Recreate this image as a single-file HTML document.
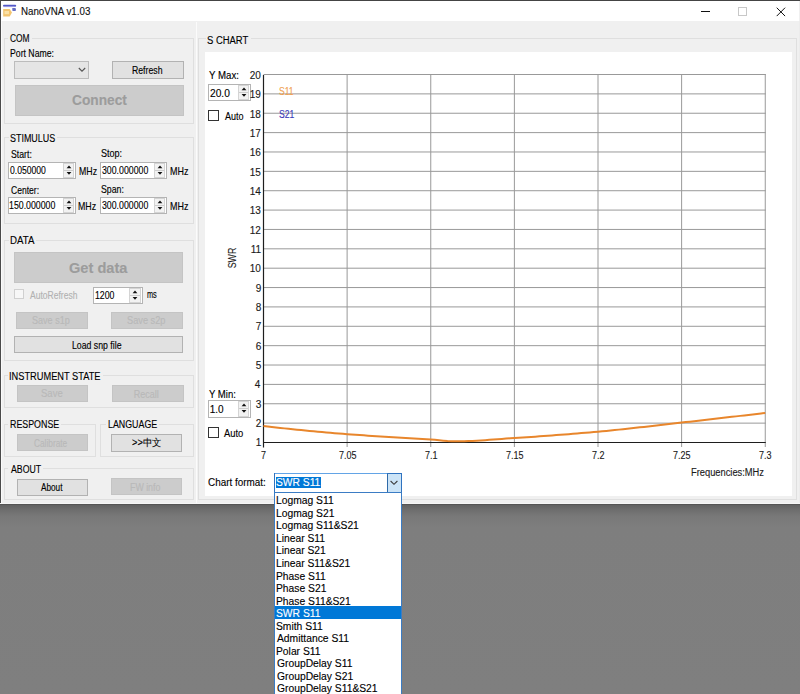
<!DOCTYPE html>
<html><head><meta charset="utf-8"><style>
html,body{margin:0;padding:0;width:800px;height:694px;overflow:hidden;background:#7f7f7f;}
body{position:relative;font-family:"Liberation Sans",sans-serif;}
.a{position:absolute;}
.t{position:absolute;white-space:nowrap;line-height:1;font-family:"Liberation Sans",sans-serif;-webkit-text-stroke:0.12px currentColor;}
</style></head><body>
<div class="a" style="left:0;top:504px;width:800px;height:190px;background:linear-gradient(#484848 0px,#626262 1px,#6c6c6c 5px,#787878 12px,#7e7e7e 24px,#7f7f7f 190px)"></div>
<div class="a" style="left:0px;top:0px;width:800px;height:504px;background:#f0f0f0;"></div>
<div class="a" style="left:0px;top:0px;width:800px;height:1px;background:#444;"></div>
<div class="a" style="left:0px;top:0px;width:1px;height:504px;background:#4a4a4a;"></div>
<div class="a" style="left:1px;top:21px;width:1px;height:483px;background:#fafafa;"></div>
<div class="a" style="left:799px;top:21px;width:1px;height:483px;background:#ececec;"></div>
<div class="a" style="left:0px;top:503px;width:800px;height:1px;background:#f6f6f6;"></div>
<div class="a" style="left:1px;top:1px;width:798px;height:20px;background:#fff;"></div>
<svg class="a" style="left:0;top:0" width="20" height="20" viewBox="0 0 20 20">
<rect x="3" y="4.8" width="13.2" height="2" rx="1" fill="#5158c8"/>
<rect x="3.5" y="6.4" width="11" height="0.8" fill="#b8b0f0" opacity="0.7"/>
<path d="M12.3 8 h2.6 a1 1 0 0 1 1 1 v1.3 a0.8 0.8 0 0 1 -0.8 0.8 h-2 a0.8 0.8 0 0 1 -0.8 -0.8z" fill="#4a55b8" opacity="0.85"/>
<path d="M3.2 9 h6.5 l2.3 3.4 l-2.3 4 h-6.5z" fill="#f2bf62" opacity="0.9"/>
<rect x="4.5" y="11" width="4.5" height="3.2" fill="#fbe2a8"/>
</svg>
<div class="t" style="top:7.00px;font-size:10px;color:#111;left:20.53px;transform-origin:0 0;transform:scale(0.9743,1.000);">NanoVNA v1.03</div>
<div class="a" style="left:701px;top:11px;width:9px;height:1px;background:#111;"></div>
<div class="a" style="left:738px;top:7px;width:9px;height:9px;border:1px solid #c8c8c8;box-sizing:border-box;"></div>
<svg class="a" style="left:775px;top:5.5px" width="12" height="12" viewBox="0 0 12 12"><path d="M1.7 1.7 L10.1 10.1 M10.1 1.7 L1.7 10.1" stroke="#111" stroke-width="1"/></svg>
<div class="a" style="left:4px;top:38px;width:190px;height:86px;border:1px solid #dfdfdf;box-sizing:border-box;"></div>
<div class="a" style="left:7.75px;top:37px;width:23.85px;height:3px;background:#f0f0f0;"></div>
<div class="t" style="top:34.00px;font-size:10px;color:#000;left:10.05px;transform-origin:0 0;transform:scale(0.8370,1.000);">COM</div>
<div class="t" style="top:48.88px;font-size:9px;color:#000;left:10.23px;transform-origin:0 0;transform:scale(0.9659,1.120);">Port Name:</div>
<div class="a" style="left:14px;top:61px;width:75px;height:18px;background:#e5e5e5;border:1px solid #bcbcbc;box-sizing:border-box;"></div>
<svg class="a" style="left:78px;top:67px" width="8" height="6" viewBox="0 0 8 6"><path d="M0.8 1 L4 4.2 L7.2 1" fill="none" stroke="#555" stroke-width="1.1"/></svg>
<div class="a" style="left:112px;top:61px;width:72px;height:18px;background:#e1e1e1;border:1px solid #b2b2b2;box-sizing:border-box;"></div>
<div class="t" style="top:66.00px;font-size:9px;color:#000;left:131.73px;transform-origin:0 0;transform:scale(0.9667,1.120);">Refresh</div>
<div class="a" style="left:15px;top:85px;width:169px;height:31px;background:#cccccc;border:1px solid #c4c4c4;box-sizing:border-box;"></div>
<div class="t" style="top:93.00px;font-size:14px;color:#9c9c9c;font-weight:700;left:71.70px;transform-origin:0 0;transform:scale(0.9804,1.000);">Connect</div>
<div class="a" style="left:4px;top:137px;width:190px;height:87px;border:1px solid #dfdfdf;box-sizing:border-box;"></div>
<div class="a" style="left:8.6px;top:136px;width:48.4px;height:3px;background:#f0f0f0;"></div>
<div class="t" style="top:134.00px;font-size:10px;color:#000;left:10.01px;transform-origin:0 0;transform:scale(0.8939,1.000);">STIMULUS</div>
<div class="t" style="top:149.88px;font-size:9px;color:#000;left:10.58px;transform-origin:0 0;transform:scale(0.9700,1.120);">Start:</div>
<div class="t" style="top:149.48px;font-size:9px;color:#000;left:100.99px;transform-origin:0 0;transform:scale(1.0053,1.120);">Stop:</div>
<div class="a" style="left:8px;top:162px;width:68px;height:17px;background:#fff;border:1px solid #b4b4b4;box-sizing:border-box;"></div>
<div class="a" style="left:63px;top:163px;width:11px;height:15px;background:#f2f2f2;border:1px solid #d4d4d4;box-sizing:border-box;"></div>
<div class="a" style="left:64px;top:170px;width:9px;height:1px;background:#cdcdcd;"></div>
<svg class="a" style="left:65.50px;top:164.6px" width="6" height="10" viewBox="0 0 6 10"><path d="M0.6 3.3 L3 0.5 L5.4 3.3Z M0.6 7.1 L3 9.7 L5.4 7.1Z" fill="#111"/></svg>
<div class="t" style="top:166.00px;font-size:10px;color:#000;left:10.05px;transform-origin:0 0;transform:scale(0.8607,1.000);">0.050000</div>
<div class="t" style="top:166.88px;font-size:9px;color:#000;left:79.08px;transform-origin:0 0;transform:scale(0.9735,1.120);">MHz</div>
<div class="a" style="left:100px;top:162px;width:67px;height:17px;background:#fff;border:1px solid #b4b4b4;box-sizing:border-box;"></div>
<div class="a" style="left:154px;top:163px;width:11px;height:15px;background:#f2f2f2;border:1px solid #d4d4d4;box-sizing:border-box;"></div>
<div class="a" style="left:155px;top:170px;width:9px;height:1px;background:#cdcdcd;"></div>
<svg class="a" style="left:156.50px;top:164.6px" width="6" height="10" viewBox="0 0 6 10"><path d="M0.6 3.3 L3 0.5 L5.4 3.3Z M0.6 7.1 L3 9.7 L5.4 7.1Z" fill="#111"/></svg>
<div class="t" style="top:166.00px;font-size:10px;color:#000;left:102.40px;transform-origin:0 0;transform:scale(0.8755,1.000);">300.000000</div>
<div class="t" style="top:166.88px;font-size:9px;color:#000;left:169.81px;transform-origin:0 0;transform:scale(0.9941,1.120);">MHz</div>
<div class="t" style="top:185.88px;font-size:9px;color:#000;left:10.90px;transform-origin:0 0;transform:scale(0.9500,1.120);">Center:</div>
<div class="t" style="top:184.88px;font-size:9px;color:#000;left:101.03px;transform-origin:0 0;transform:scale(0.9727,1.120);">Span:</div>
<div class="a" style="left:8px;top:197px;width:68px;height:17px;background:#fff;border:1px solid #b4b4b4;box-sizing:border-box;"></div>
<div class="a" style="left:63px;top:198px;width:11px;height:15px;background:#f2f2f2;border:1px solid #d4d4d4;box-sizing:border-box;"></div>
<div class="a" style="left:64px;top:205px;width:9px;height:1px;background:#cdcdcd;"></div>
<svg class="a" style="left:65.50px;top:199.6px" width="6" height="10" viewBox="0 0 6 10"><path d="M0.6 3.3 L3 0.5 L5.4 3.3Z M0.6 7.1 L3 9.7 L5.4 7.1Z" fill="#111"/></svg>
<div class="t" style="top:201.00px;font-size:10px;color:#000;left:9.42px;transform-origin:0 0;transform:scale(0.8779,1.000);">150.000000</div>
<div class="t" style="top:201.88px;font-size:9px;color:#000;left:78.32px;transform-origin:0 0;transform:scale(0.9794,1.120);">MHz</div>
<div class="a" style="left:100px;top:197px;width:67px;height:17px;background:#fff;border:1px solid #b4b4b4;box-sizing:border-box;"></div>
<div class="a" style="left:154px;top:198px;width:11px;height:15px;background:#f2f2f2;border:1px solid #d4d4d4;box-sizing:border-box;"></div>
<div class="a" style="left:155px;top:205px;width:9px;height:1px;background:#cdcdcd;"></div>
<svg class="a" style="left:156.50px;top:199.6px" width="6" height="10" viewBox="0 0 6 10"><path d="M0.6 3.3 L3 0.5 L5.4 3.3Z M0.6 7.1 L3 9.7 L5.4 7.1Z" fill="#111"/></svg>
<div class="t" style="top:201.00px;font-size:10px;color:#000;left:102.40px;transform-origin:0 0;transform:scale(0.8755,1.000);">300.000000</div>
<div class="t" style="top:201.88px;font-size:9px;color:#000;left:169.81px;transform-origin:0 0;transform:scale(0.9941,1.120);">MHz</div>
<div class="a" style="left:4px;top:240px;width:190px;height:121px;border:1px solid #dfdfdf;box-sizing:border-box;"></div>
<div class="a" style="left:8.6px;top:239px;width:27.799999999999997px;height:3px;background:#f0f0f0;"></div>
<div class="t" style="top:236.00px;font-size:10px;color:#000;left:9.93px;transform-origin:0 0;transform:scale(0.9667,1.000);">DATA</div>
<div class="a" style="left:14px;top:252px;width:169px;height:31px;background:#cccccc;border:1px solid #c4c4c4;box-sizing:border-box;"></div>
<div class="t" style="top:261.00px;font-size:14px;color:#9c9c9c;font-weight:700;left:69.05px;transform-origin:0 0;transform:scale(1.0437,1.000);">Get data</div>
<div class="a" style="left:14px;top:289px;width:10px;height:10px;background:#f7f7f7;border:1px solid #d0d0d0;box-sizing:border-box;"></div>
<div class="t" style="top:291.00px;font-size:9px;color:#b2b2b2;left:29.90px;transform-origin:0 0;transform:scale(0.9480,1.120);">AutoRefresh</div>
<div class="a" style="left:93px;top:287px;width:50px;height:17px;background:#fff;border:1px solid #b4b4b4;box-sizing:border-box;"></div>
<div class="a" style="left:129px;top:288px;width:12px;height:15px;background:#f2f2f2;border:1px solid #d4d4d4;box-sizing:border-box;"></div>
<div class="a" style="left:130px;top:295px;width:10px;height:1px;background:#cdcdcd;"></div>
<svg class="a" style="left:132.00px;top:289.6px" width="6" height="10" viewBox="0 0 6 10"><path d="M0.6 3.3 L3 0.5 L5.4 3.3Z M0.6 7.1 L3 9.7 L5.4 7.1Z" fill="#111"/></svg>
<div class="t" style="top:291.00px;font-size:10px;color:#000;left:95.42px;transform-origin:0 0;transform:scale(0.8762,1.000);">1200</div>
<div class="t" style="top:289.76px;font-size:9px;color:#000;left:146.90px;transform-origin:0 0;transform:scale(0.8167,1.120);">ms</div>
<div class="a" style="left:16px;top:312px;width:72px;height:17px;background:#cccccc;border:1px solid #c4c4c4;box-sizing:border-box;"></div>
<div class="t" style="top:315.88px;font-size:9px;color:#b9b9b9;left:31.69px;transform-origin:0 0;transform:scale(1.0056,1.120);">Save s1p</div>
<div class="a" style="left:111px;top:312px;width:72px;height:17px;background:#cccccc;border:1px solid #c4c4c4;box-sizing:border-box;"></div>
<div class="t" style="top:315.88px;font-size:9px;color:#b9b9b9;left:127.38px;transform-origin:0 0;transform:scale(1.0250,1.120);">Save s2p</div>
<div class="a" style="left:14px;top:336px;width:169px;height:17px;background:#e1e1e1;border:1px solid #b2b2b2;box-sizing:border-box;"></div>
<div class="t" style="top:341.00px;font-size:9px;color:#000;left:72.13px;transform-origin:0 0;transform:scale(0.9700,1.120);">Load snp file</div>
<div class="a" style="left:4px;top:375px;width:190px;height:33px;border:1px solid #dfdfdf;box-sizing:border-box;"></div>
<div class="a" style="left:8.1px;top:374px;width:95.30000000000001px;height:3px;background:#f0f0f0;"></div>
<div class="t" style="top:372.00px;font-size:10px;color:#000;left:9.47px;transform-origin:0 0;transform:scale(0.9255,1.000);">INSTRUMENT STATE</div>
<div class="a" style="left:17px;top:385px;width:71px;height:17px;background:#cccccc;border:1px solid #c4c4c4;box-sizing:border-box;"></div>
<div class="t" style="top:388.88px;font-size:9px;color:#b9b9b9;left:40.74px;transform-origin:0 0;transform:scale(1.0605,1.120);">Save</div>
<div class="a" style="left:112px;top:385px;width:72px;height:17px;background:#cccccc;border:1px solid #c4c4c4;box-sizing:border-box;"></div>
<div class="t" style="top:390.00px;font-size:9px;color:#b9b9b9;left:133.80px;transform-origin:0 0;transform:scale(1.0000,1.120);">Recall</div>
<div class="a" style="left:4px;top:424px;width:92px;height:33px;border:1px solid #dfdfdf;box-sizing:border-box;"></div>
<div class="a" style="left:8.4px;top:423px;width:52.4px;height:3px;background:#f0f0f0;"></div>
<div class="t" style="top:420.00px;font-size:10px;color:#000;left:9.81px;transform-origin:0 0;transform:scale(0.8852,1.000);">RESPONSE</div>
<div class="a" style="left:17px;top:434px;width:71px;height:17px;background:#cccccc;border:1px solid #c4c4c4;box-sizing:border-box;"></div>
<div class="t" style="top:439.00px;font-size:9px;color:#b9b9b9;left:33.90px;transform-origin:0 0;transform:scale(0.9222,1.120);">Calibrate</div>
<div class="a" style="left:100px;top:424px;width:94px;height:33px;border:1px solid #dfdfdf;box-sizing:border-box;"></div>
<div class="a" style="left:106.2px;top:423px;width:52.39999999999999px;height:3px;background:#f0f0f0;"></div>
<div class="t" style="top:420.00px;font-size:10px;color:#000;left:107.61px;transform-origin:0 0;transform:scale(0.8852,1.000);">LANGUAGE</div>
<div class="a" style="left:111px;top:434px;width:71px;height:18px;background:#e1e1e1;border:1px solid #b2b2b2;box-sizing:border-box;"></div>
<div class="t" style="top:438.00px;font-size:10px;color:#000;left:131.50px;transform-origin:0 0;transform:scale(0.9258,1.000);">&gt;&gt;中文</div>
<div class="a" style="left:4px;top:468px;width:190px;height:32px;border:1px solid #dfdfdf;box-sizing:border-box;"></div>
<div class="a" style="left:8.4px;top:467px;width:34.300000000000004px;height:3px;background:#f0f0f0;"></div>
<div class="t" style="top:465.00px;font-size:10px;color:#000;left:10.70px;transform-origin:0 0;transform:scale(0.8735,1.000);">ABOUT</div>
<div class="a" style="left:17px;top:479px;width:71px;height:17px;background:#e1e1e1;border:1px solid #b2b2b2;box-sizing:border-box;"></div>
<div class="t" style="top:483.00px;font-size:9px;color:#000;left:40.70px;transform-origin:0 0;transform:scale(0.9125,1.120);">About</div>
<div class="a" style="left:111px;top:478px;width:71px;height:17px;background:#cccccc;border:1px solid #c4c4c4;box-sizing:border-box;"></div>
<div class="t" style="top:483.00px;font-size:9px;color:#b9b9b9;left:129.82px;transform-origin:0 0;transform:scale(0.9800,1.120);">FW info</div>
<div class="a" style="left:196px;top:22px;width:1px;height:481px;background:#fbfbfb;"></div>
<div class="a" style="left:198px;top:38px;width:599px;height:462px;border:1px solid #dfdfdf;box-sizing:border-box;"></div>
<div class="a" style="left:205.8px;top:37px;width:45.19999999999999px;height:3px;background:#f0f0f0;"></div>
<div class="t" style="top:36.00px;font-size:10px;color:#000;left:207.16px;transform-origin:0 0;transform:scale(0.9442,1.000);">S CHART</div>
<div class="a" style="left:205px;top:52px;width:587px;height:444px;background:#fff;"></div>
<div class="t" style="top:71.00px;font-size:10px;color:#000;left:208.80px;transform-origin:0 0;transform:scale(0.9667,1.000);">Y Max:</div>
<div class="a" style="left:208px;top:84px;width:43px;height:17px;background:#fff;border:1px solid #b4b4b4;box-sizing:border-box;"></div>
<div class="a" style="left:238px;top:85px;width:11px;height:15px;background:#f2f2f2;border:1px solid #d4d4d4;box-sizing:border-box;"></div>
<div class="a" style="left:239px;top:92px;width:9px;height:1px;background:#cdcdcd;"></div>
<svg class="a" style="left:240.50px;top:86.6px" width="6" height="10" viewBox="0 0 6 10"><path d="M0.6 3.3 L3 0.5 L5.4 3.3Z M0.6 7.1 L3 9.7 L5.4 7.1Z" fill="#111"/></svg>
<div class="t" style="top:89.00px;font-size:10px;color:#000;left:210.30px;transform-origin:0 0;transform:scale(1.0211,1.000);">20.0</div>
<div class="a" style="left:208px;top:110px;width:11px;height:11px;background:#fff;border:1px solid #333;box-sizing:border-box;"></div>
<div class="t" style="top:112.00px;font-size:10px;color:#000;left:224.70px;transform-origin:0 0;transform:scale(0.9050,1.000);">Auto</div>
<div class="t" style="top:390.00px;font-size:10px;color:#000;left:208.70px;transform-origin:0 0;transform:scale(0.9536,1.000);">Y Min:</div>
<div class="a" style="left:208px;top:400px;width:43px;height:18px;background:#fff;border:1px solid #b4b4b4;box-sizing:border-box;"></div>
<div class="a" style="left:238px;top:401px;width:11px;height:16px;background:#f2f2f2;border:1px solid #d4d4d4;box-sizing:border-box;"></div>
<div class="a" style="left:239px;top:408px;width:9px;height:1px;background:#cdcdcd;"></div>
<svg class="a" style="left:240.50px;top:402.6px" width="6" height="10" viewBox="0 0 6 10"><path d="M0.6 3.3 L3 0.5 L5.4 3.3Z M0.6 7.1 L3 9.7 L5.4 7.1Z" fill="#111"/></svg>
<div class="t" style="top:405.00px;font-size:10px;color:#000;left:209.70px;transform-origin:0 0;transform:scale(1.0000,1.000);">1.0</div>
<div class="a" style="left:208px;top:427px;width:11px;height:11px;background:#fff;border:1px solid #333;box-sizing:border-box;"></div>
<div class="t" style="top:429.00px;font-size:10px;color:#000;left:224.30px;transform-origin:0 0;transform:scale(0.9400,1.000);">Auto</div>
<svg class="a" style="left:0;top:0" width="800" height="504" viewBox="0 0 800 504">
<line x1="263.5" y1="423.13" x2="765.75" y2="423.13" stroke="#999" stroke-width="1"/>
<line x1="263.5" y1="403.76" x2="765.75" y2="403.76" stroke="#999" stroke-width="1"/>
<line x1="263.5" y1="384.40" x2="765.75" y2="384.40" stroke="#999" stroke-width="1"/>
<line x1="263.5" y1="365.03" x2="765.75" y2="365.03" stroke="#999" stroke-width="1"/>
<line x1="263.5" y1="345.66" x2="765.75" y2="345.66" stroke="#999" stroke-width="1"/>
<line x1="263.5" y1="326.29" x2="765.75" y2="326.29" stroke="#999" stroke-width="1"/>
<line x1="263.5" y1="306.92" x2="765.75" y2="306.92" stroke="#999" stroke-width="1"/>
<line x1="263.5" y1="287.56" x2="765.75" y2="287.56" stroke="#999" stroke-width="1"/>
<line x1="263.5" y1="268.19" x2="765.75" y2="268.19" stroke="#999" stroke-width="1"/>
<line x1="263.5" y1="248.82" x2="765.75" y2="248.82" stroke="#999" stroke-width="1"/>
<line x1="263.5" y1="229.45" x2="765.75" y2="229.45" stroke="#999" stroke-width="1"/>
<line x1="263.5" y1="210.08" x2="765.75" y2="210.08" stroke="#999" stroke-width="1"/>
<line x1="263.5" y1="190.72" x2="765.75" y2="190.72" stroke="#999" stroke-width="1"/>
<line x1="263.5" y1="171.35" x2="765.75" y2="171.35" stroke="#999" stroke-width="1"/>
<line x1="263.5" y1="151.98" x2="765.75" y2="151.98" stroke="#999" stroke-width="1"/>
<line x1="263.5" y1="132.61" x2="765.75" y2="132.61" stroke="#999" stroke-width="1"/>
<line x1="263.5" y1="113.24" x2="765.75" y2="113.24" stroke="#999" stroke-width="1"/>
<line x1="263.5" y1="93.88" x2="765.75" y2="93.88" stroke="#999" stroke-width="1"/>
<line x1="263.5" y1="74.51" x2="765.75" y2="74.51" stroke="#999" stroke-width="1"/>
<line x1="347.12" y1="74" x2="347.12" y2="447" stroke="#999" stroke-width="1"/>
<line x1="430.75" y1="74" x2="430.75" y2="447" stroke="#999" stroke-width="1"/>
<line x1="514.38" y1="74" x2="514.38" y2="447" stroke="#999" stroke-width="1"/>
<line x1="598.00" y1="74" x2="598.00" y2="447" stroke="#999" stroke-width="1"/>
<line x1="681.62" y1="74" x2="681.62" y2="447" stroke="#999" stroke-width="1"/>
<line x1="765.25" y1="74" x2="765.25" y2="447" stroke="#999" stroke-width="1"/>
<line x1="263.5" y1="75" x2="263.5" y2="447.5" stroke="#1e1e1e" stroke-width="1.2"/>
<line x1="263" y1="442.5" x2="765.75" y2="442.5" stroke="#1e1e1e" stroke-width="1.2"/>
<polyline points="263.50,426.06 267.68,426.53 271.86,427.00 276.04,427.46 280.22,427.92 284.41,428.37 288.59,428.81 292.77,429.25 296.95,429.67 301.13,430.09 305.31,430.51 309.49,430.91 313.68,431.31 317.86,431.70 322.04,432.08 326.22,432.45 330.40,432.82 334.58,433.17 338.76,433.52 342.94,433.85 347.12,434.18 351.31,434.50 355.49,434.80 359.67,435.09 363.85,435.37 368.03,435.64 372.21,435.91 376.39,436.17 380.58,436.42 384.76,436.67 388.94,436.92 393.12,437.17 397.30,437.41 401.48,437.66 405.66,437.91 409.84,438.16 414.02,438.41 418.21,438.67 422.39,438.94 426.57,439.21 430.75,439.50 434.93,439.83 439.11,440.23 443.29,440.63 447.48,440.99 451.66,441.24 455.84,441.33 460.02,441.30 464.20,441.22 468.38,441.08 472.56,440.90 476.74,440.68 480.92,440.43 485.11,440.16 489.29,439.87 493.47,439.56 497.65,439.25 501.83,438.93 506.01,438.62 510.19,438.33 514.38,438.05 518.56,437.78 522.74,437.50 526.92,437.22 531.10,436.94 535.28,436.65 539.46,436.35 543.64,436.05 547.82,435.75 552.01,435.44 556.19,435.12 560.37,434.80 564.55,434.48 568.73,434.15 572.91,433.81 577.09,433.47 581.28,433.12 585.46,432.77 589.64,432.41 593.82,432.04 598.00,431.67 602.18,431.29 606.36,430.89 610.54,430.48 614.72,430.06 618.91,429.63 623.09,429.19 627.27,428.75 631.45,428.29 635.63,427.83 639.81,427.36 643.99,426.89 648.18,426.41 652.36,425.93 656.54,425.45 660.72,424.97 664.90,424.49 669.08,424.01 673.26,423.53 677.44,423.05 681.62,422.58 685.81,422.11 689.99,421.64 694.17,421.17 698.35,420.70 702.53,420.22 706.71,419.74 710.89,419.27 715.07,418.79 719.26,418.31 723.44,417.82 727.62,417.34 731.80,416.85 735.98,416.37 740.16,415.88 744.34,415.39 748.53,414.90 752.71,414.40 756.89,413.91 761.07,413.41 765.25,412.92" fill="none" stroke="#e8862c" stroke-width="2"/>
</svg>
<div class="t" style="top:438.00px;font-size:10px;color:#1a1a1a;left:255.80px;transform-origin:0 0;transform:scale(1.0000,1.000);">1</div>
<div class="t" style="top:419.00px;font-size:10px;color:#1a1a1a;left:255.80px;transform-origin:0 0;transform:scale(1.0000,1.000);">2</div>
<div class="t" style="top:400.00px;font-size:10px;color:#1a1a1a;left:255.80px;transform-origin:0 0;transform:scale(1.0000,1.000);">3</div>
<div class="t" style="top:380.00px;font-size:10px;color:#1a1a1a;left:254.80px;transform-origin:0 0;transform:scale(1.0000,1.000);">4</div>
<div class="t" style="top:361.00px;font-size:10px;color:#1a1a1a;left:255.80px;transform-origin:0 0;transform:scale(1.0000,1.000);">5</div>
<div class="t" style="top:342.00px;font-size:10px;color:#1a1a1a;left:255.80px;transform-origin:0 0;transform:scale(1.0000,1.000);">6</div>
<div class="t" style="top:322.00px;font-size:10px;color:#1a1a1a;left:255.80px;transform-origin:0 0;transform:scale(1.0000,1.000);">7</div>
<div class="t" style="top:303.00px;font-size:10px;color:#1a1a1a;left:255.80px;transform-origin:0 0;transform:scale(1.0000,1.000);">8</div>
<div class="t" style="top:284.00px;font-size:10px;color:#1a1a1a;left:255.80px;transform-origin:0 0;transform:scale(1.0000,1.000);">9</div>
<div class="t" style="top:264.00px;font-size:10px;color:#1a1a1a;left:249.80px;transform-origin:0 0;transform:scale(1.0000,1.000);">10</div>
<div class="t" style="top:245.00px;font-size:10px;color:#1a1a1a;left:250.80px;transform-origin:0 0;transform:scale(1.0000,1.000);">11</div>
<div class="t" style="top:226.00px;font-size:10px;color:#1a1a1a;left:249.80px;transform-origin:0 0;transform:scale(1.0000,1.000);">12</div>
<div class="t" style="top:206.00px;font-size:10px;color:#1a1a1a;left:249.80px;transform-origin:0 0;transform:scale(1.0000,1.000);">13</div>
<div class="t" style="top:187.00px;font-size:10px;color:#1a1a1a;left:249.80px;transform-origin:0 0;transform:scale(1.0000,1.000);">14</div>
<div class="t" style="top:168.00px;font-size:10px;color:#1a1a1a;left:249.80px;transform-origin:0 0;transform:scale(1.0000,1.000);">15</div>
<div class="t" style="top:148.00px;font-size:10px;color:#1a1a1a;left:249.80px;transform-origin:0 0;transform:scale(1.0000,1.000);">16</div>
<div class="t" style="top:129.00px;font-size:10px;color:#1a1a1a;left:249.80px;transform-origin:0 0;transform:scale(1.0000,1.000);">17</div>
<div class="t" style="top:110.00px;font-size:10px;color:#1a1a1a;left:249.80px;transform-origin:0 0;transform:scale(1.0000,1.000);">18</div>
<div class="t" style="top:90.00px;font-size:10px;color:#1a1a1a;left:249.80px;transform-origin:0 0;transform:scale(1.0000,1.000);">19</div>
<div class="t" style="top:71.00px;font-size:10px;color:#1a1a1a;left:249.80px;transform-origin:0 0;transform:scale(1.0000,1.000);">20</div>
<div class="t" style="top:451.00px;font-size:10px;color:#1a1a1a;left:261.25px;transform-origin:0 0;transform:scale(0.9000,1.000);">7</div>
<div class="t" style="top:451.00px;font-size:10px;color:#1a1a1a;left:338.57px;transform-origin:0 0;transform:scale(0.9000,1.000);">7.05</div>
<div class="t" style="top:451.00px;font-size:10px;color:#1a1a1a;left:424.90px;transform-origin:0 0;transform:scale(0.9000,1.000);">7.1</div>
<div class="t" style="top:451.00px;font-size:10px;color:#1a1a1a;left:505.82px;transform-origin:0 0;transform:scale(0.9000,1.000);">7.15</div>
<div class="t" style="top:451.00px;font-size:10px;color:#1a1a1a;left:592.15px;transform-origin:0 0;transform:scale(0.9000,1.000);">7.2</div>
<div class="t" style="top:451.00px;font-size:10px;color:#1a1a1a;left:673.08px;transform-origin:0 0;transform:scale(0.9000,1.000);">7.25</div>
<div class="t" style="top:451.00px;font-size:10px;color:#1a1a1a;left:758.95px;transform-origin:0 0;transform:scale(0.9000,1.000);">7.3</div>
<div class="t" style="top:87.00px;font-size:10px;color:#f0a050;left:278.84px;transform-origin:0 0;transform:scale(0.8594,1.000);">S11</div>
<div class="t" style="top:110.00px;font-size:10px;color:#3a3ab8;left:278.84px;transform-origin:0 0;transform:scale(0.8594,1.000);">S21</div>
<div class="t" style="left:233.3px;top:258px;font-size:10px;color:#1a1a1a;transform:translate(-50%,-50%) rotate(-90deg) scaleX(0.88)">SWR</div>
<div class="t" style="top:468.00px;font-size:10px;color:#1a1a1a;left:690.77px;transform-origin:0 0;transform:scale(0.9312,1.000);">Frequencies:MHz</div>
<div class="t" style="top:478.00px;font-size:10px;color:#000;left:207.55px;transform-origin:0 0;transform:scale(0.9905,1.000);">Chart format:</div>
<div class="a" style="left:274px;top:473px;width:128px;height:20px;background:#fff;border:1px solid #2f73c0;box-sizing:border-box;"></div>
<div class="a" style="left:275px;top:473px;width:112px;height:1px;background:#63a4e6;"></div>
<div class="a" style="left:387px;top:474px;width:14px;height:18px;background:#cce4f7;"></div>
<div class="a" style="left:387px;top:474px;width:1px;height:18px;background:#2f6aa8;"></div>
<svg class="a" style="left:390px;top:480px" width="8" height="6" viewBox="0 0 8 6"><path d="M0.6 1 L4 4.3 L7.4 1" fill="none" stroke="#3c3c3c" stroke-width="1.1"/></svg>
<div class="a" style="left:276px;top:477px;width:45px;height:10.5px;background:#0078d7;"></div>
<div class="t" style="top:478.00px;font-size:10px;color:#fff;left:275.87px;transform-origin:0 0;transform:scale(1.0262,1.000);">SWR S11</div>
<div class="a" style="left:274px;top:492px;width:128px;height:203px;background:#fff;border:1px solid #3b7cc4;box-sizing:border-box;"></div>
<div class="t" style="top:496.00px;font-size:10px;color:#000;left:275.87px;transform-origin:0 0;transform:scale(1.0300,1.000);">Logmag S11</div>
<div class="t" style="top:509.00px;font-size:10px;color:#000;left:275.87px;transform-origin:0 0;transform:scale(1.0300,1.000);">Logmag S21</div>
<div class="t" style="top:521.00px;font-size:10px;color:#000;left:275.87px;transform-origin:0 0;transform:scale(1.0300,1.000);">Logmag S11&amp;S21</div>
<div class="t" style="top:534.00px;font-size:10px;color:#000;left:275.87px;transform-origin:0 0;transform:scale(1.0300,1.000);">Linear S11</div>
<div class="t" style="top:546.00px;font-size:10px;color:#000;left:275.87px;transform-origin:0 0;transform:scale(1.0300,1.000);">Linear S21</div>
<div class="t" style="top:559.00px;font-size:10px;color:#000;left:275.87px;transform-origin:0 0;transform:scale(1.0300,1.000);">Linear S11&amp;S21</div>
<div class="t" style="top:572.00px;font-size:10px;color:#000;left:275.87px;transform-origin:0 0;transform:scale(1.0300,1.000);">Phase S11</div>
<div class="t" style="top:584.00px;font-size:10px;color:#000;left:275.87px;transform-origin:0 0;transform:scale(1.0300,1.000);">Phase S21</div>
<div class="t" style="top:597.00px;font-size:10px;color:#000;left:275.87px;transform-origin:0 0;transform:scale(1.0300,1.000);">Phase S11&amp;S21</div>
<div class="a" style="left:275px;top:606.0px;width:126px;height:12.54px;background:#0078d7;"></div>
<div class="t" style="top:609.00px;font-size:10px;color:#fff;left:275.87px;transform-origin:0 0;transform:scale(1.0300,1.000);">SWR S11</div>
<div class="t" style="top:622.00px;font-size:10px;color:#000;left:275.87px;transform-origin:0 0;transform:scale(1.0300,1.000);">Smith S11</div>
<div class="t" style="top:634.00px;font-size:10px;color:#000;left:276.90px;transform-origin:0 0;transform:scale(1.0300,1.000);">Admittance S11</div>
<div class="t" style="top:647.00px;font-size:10px;color:#000;left:275.87px;transform-origin:0 0;transform:scale(1.0300,1.000);">Polar S11</div>
<div class="t" style="top:659.00px;font-size:10px;color:#000;left:276.90px;transform-origin:0 0;transform:scale(1.0300,1.000);">GroupDelay S11</div>
<div class="t" style="top:672.00px;font-size:10px;color:#000;left:276.90px;transform-origin:0 0;transform:scale(1.0300,1.000);">GroupDelay S21</div>
<div class="t" style="top:684.00px;font-size:10px;color:#000;left:276.90px;transform-origin:0 0;transform:scale(1.0300,1.000);">GroupDelay S11&amp;S21</div>
</body></html>
